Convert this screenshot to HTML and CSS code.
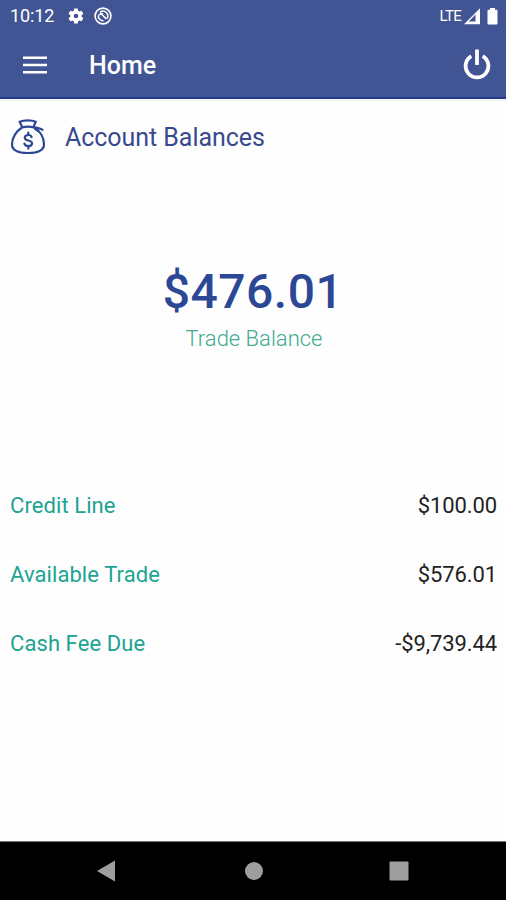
FILE: index.html
```html
<!DOCTYPE html>
<html lang="en">
<head>
<meta charset="utf-8">
<title>Home</title>
<link rel="stylesheet" href="styles.css">
</head>
<body>
<div class="screen">
  <div class="status">
    <span class="clock">10:12</span>
    <svg class="gear" width="18" height="18" viewBox="0 0 24 24"><path fill="#fff" fill-rule="evenodd" d="M19.4 13c0-.3.1-.6.1-1s0-.7-.1-1l2.1-1.600c.2-.2.3-.4.1-.7l-2-3.400c-.1-.2-.4-.3-.6-.2l-2.500 1c-.5-.4-1.100-.7-1.700-1l-.4-2.600c0-.3-.2-.5-.5-.5h-4c-.3 0-.5.2-.5.5L9 5.100c-.6.3-1.200.6-1.700 1l-2.500-1c-.2-.1-.5 0-.6.2l-2 3.400c-.1.3-.1.5.1.7L4.500 11c0 .3-.1.700-.1 1s0 .7.1 1l-2.200 1.600c-.2.2-.2.4-.1.7l2 3.400c.1.2.4.3.6.2l2.500-1c.5.4 1.100.7 1.700 1l.4 2.600c0 .3.2.5.5.5h4c.3 0 .5-.2.5-.5l.4-2.600c.6-.3 1.200-.6 1.700-1l2.500 1c.2.1.5 0 .6-.2l2-3.400c.1-.2.1-.5-.1-.7zM12 15a3 3 0 1 1 0-6 3 3 0 0 1 0 6z"/></svg>
    <svg class="round" width="18" height="18" viewBox="0 0 18 18" fill="none" stroke="#fff"><circle cx="9" cy="9" r="7.900" stroke-width="1.600"/><path d="M6.200 5.100A4.800 4.800 0 0 1 13 11.600M4.300 8.500A4.800 4.800 0 0 0 9.500 13.700M4.600 8c2-1.200 3.700-.6 4.600.8l3 3.200M6 6.200l3 .8" stroke-width="1.500"/></svg>
    <span class="lte">LTE</span>
    <svg class="signal" width="17" height="17" viewBox="0 0 17 17"><path fill="#fff" fill-rule="evenodd" d="M0 16.300 16 .3v16zM11.500 6.500 4.800 13.500h6.700z"/></svg>
    <svg class="battery" width="11" height="17" viewBox="0 0 11 17"><path fill="#fff" d="M3 0h5v1.800h1.300c.7 0 1.200.5 1.200 1.200v12.200c0 .7-.5 1.300-1.200 1.300H1.700c-.7 0-1.200-.6-1.200-1.300V3c0-.7.5-1.200 1.200-1.200H3z"/></svg>
  </div>
  <header class="bar">
    <svg class="menu" width="24" height="18" viewBox="0 0 24 18"><path fill="#fff" d="M0 .5h24V3H0zM0 7.700h24v2.600H0zM0 15h24v2.500H0z"/></svg>
    <h1 class="title">Home</h1>
    <svg class="power" width="28" height="32" viewBox="0 0 28 32" fill="none" stroke="#fff" stroke-width="3.800"><path d="M14 .5v15.500M8.300 7.200A11.400 11.400 0 1 0 19.700 7.200"/></svg>
  </header>
  <main class="content">
    <section class="heading">
      <svg class="bag" width="36" height="36" viewBox="0 0 36 36" fill="none" stroke="#2c4795" stroke-width="2.200" stroke-linecap="round" stroke-linejoin="round"><path d="M12.300 8.200 9.600 2.800C14 .8 21.500.8 25.800 2.800L23.300 8.200M12 8.500C16 7.200 20 7.200 24 8.500M12 8.500C6.500 12 2 18.500 2 25.300 2 32 8 34 18 34S34 32 34 25.300C34 18.500 30 12 24 8.500M24 8.500c3.500-.5 5.500 1.200 8.500 2.300M25 9.800l4.600 3.400"/><path d="M21.600 18.100c-.4-1.400-1.600-2.100-3.300-2.100-2 0-3.500 1-3.500 2.700 0 3.900 7.200 1.800 7.200 5.600 0 1.700-1.500 2.800-3.700 2.800-2.100 0-3.500-.9-3.900-2.500M18.300 13.500V16M18.300 27.100v2.500"/></svg>
      <h2 class="heading-text">Account Balances</h2>
    </section>
    <section class="hero">
      <div class="amount">$476.01</div>
      <div class="caption">Trade Balance</div>
    </section>
    <section class="rows">
      <div class="row"><span class="label">Credit Line</span><span class="value">$100.00</span></div>
      <div class="row"><span class="label">Available Trade</span><span class="value">$576.01</span></div>
      <div class="row"><span class="label">Cash Fee Due</span><span class="value">-$9,739.44</span></div>
    </section>
  </main>
  <nav class="nav">
    <svg width="18" height="22" viewBox="0 0 18 22"><path fill="#9e9e9e" d="M0 11 18 .5v21z"/></svg>
    <svg class="home" width="18" height="20" viewBox="0 0 18 20"><circle cx="9" cy="10" r="9" fill="#9e9e9e"/></svg>
    <svg width="20" height="20" viewBox="0 0 20 20"><rect x=".5" y=".5" width="19" height="19" rx="1" fill="#9e9e9e"/></svg>
  </nav>
</div>
</body>
</html>
```
FILE: styles.css
```css
* { box-sizing: border-box; }
body { margin: 0; background: #fefefe; font-family: Roboto, "Liberation Sans", sans-serif; }
svg { display: block; flex: none; }
h1, h2 { margin: 0; }
.screen { width: 506px; height: 900px; display: flex; flex-direction: column; overflow: hidden; }
.status { height: 32px; flex: none; background: #415594; color: #fff; display: flex; align-items: center; padding: 0 8px 0 10px; }
.clock { width: 57px; font-size: 18px; line-height: 32px; letter-spacing: -.1px; }
.round { margin-left: 9px; }
.lte { margin-left: auto; font-size: 15px; letter-spacing: -.7px; }
.signal { margin-left: 3px; }
.battery { margin-left: 6px; }
.bar { height: 67px; flex: none; background: #415594; border-bottom: 2px solid #223d86; color: #fff; display: flex; align-items: center; padding: 0 15px 0 23px; }
.title { margin-left: 42px; padding-top: 2px; font-size: 25px; font-weight: 500; line-height: 32px; }
.power { margin-left: auto; }
.content { flex: 1; display: flex; flex-direction: column; border-top: 2px solid #f0f4fa; }
.heading { height: 72px; display: flex; align-items: center; padding-left: 10px; }
.heading-text { margin-left: 19px; padding-top: 2px; font-size: 25px; font-weight: 400; line-height: 32px; letter-spacing: -.05px; color: #39498f; }
.hero { margin-top: 87px; text-align: center; }
.amount { font-size: 48px; font-weight: 500; line-height: 64px; letter-spacing: .5px; color: #2c4795; }
.caption { padding-left: 2px; font-size: 22px; line-height: 30px; font-weight: 300; color: #42a990; }
.rows { margin-top: 117px; padding: 0 9px 0 10px; }
.row { height: 69px; display: flex; align-items: center; justify-content: space-between; font-size: 22px; }
.label { color: #20a392; letter-spacing: .08px; }
.value { color: #222; letter-spacing: -.1px; }
.nav { height: 59px; flex: none; background: #000; border-top: 1px solid #777; display: flex; align-items: center; justify-content: space-between; padding: 0 97px; }
.home { margin-left: 3px; }
```
